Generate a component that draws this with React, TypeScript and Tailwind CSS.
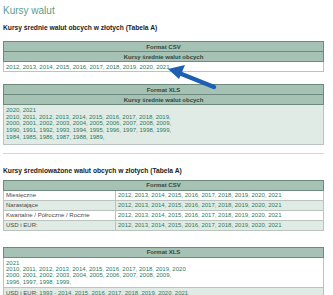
import React from 'react'

const years = (from: number, to: number) => {
  const out: number[] = []
  for (let y = from; y <= to; y++) out.push(y)
  return out.join(', ')
}

function HeaderRow({ label, span = 1 }: { label: string; span?: number }) {
  return (
    <tr>
      <th
        colSpan={span}
        className="h-[10px] border border-[#6e8a7d] bg-[#a5c2b5] p-0 text-center text-[6px] font-bold leading-[8px] text-[#35463e]"
      >
        {label}
      </th>
    </tr>
  )
}

function App() {
  const weighted = [
    { label: 'Miesięczne', bg: 'bg-white' },
    { label: 'Narastające', bg: 'bg-[#e0ebe5]' },
    { label: 'Kwartalne / Półroczne / Roczne', bg: 'bg-white' },
    { label: 'USD i EUR:', bg: 'bg-[#e0ebe5]' },
  ]

  return (
    <div className="relative h-[295px] w-[333px] overflow-hidden bg-white font-['Liberation_Sans',Arial,sans-serif]">
      <div className="flex w-[324px] flex-col pl-[3px] pt-[4px]">
        <h1 className="text-[10px] leading-[14px] text-[#5e9c8a]">Kursy walut</h1>

        <h2 className="mt-[5px] text-[6.7px] font-bold leading-[9px] text-[#222]">
          Kursy średnie walut obcych w złotych (Tabela A)
        </h2>

        {/* CSV */}
        <table className="mt-[9px] w-full border-collapse border border-[#6e8a7d]">
          <tbody>
            <HeaderRow label="Format CSV" />
            <HeaderRow label="Kursy średnie walut obcych" />
            <tr>
              <td className="h-[10px] border border-[#b9c4bf] bg-white px-[2px] py-0 text-[6px] leading-[8px] text-[#2f7a60]">
                {years(2012, 2021)}
              </td>
            </tr>
          </tbody>
        </table>

        {/* XLS */}
        <table className="mt-[12px] w-full border-collapse border border-[#6e8a7d]">
          <tbody>
            <HeaderRow label="Format XLS" />
            <HeaderRow label="Kursy średnie walut obcych" />
            <tr>
              <td className="border border-[#b9c4bf] bg-[#e0ebe5] px-[2px] pb-[3px] pt-[2px] text-[6px] leading-[6.7px] text-[#2f7a60]">
                <div>2020, 2021</div>
                <div>{years(2010, 2019)},</div>
                <div>{years(2000, 2009)},</div>
                <div>{years(1990, 1999)},</div>
                <div>{years(1984, 1989)},</div>
              </td>
            </tr>
          </tbody>
        </table>

        <div className="mt-[8px] h-px w-full bg-[#d6d6d6]" />

        <h2 className="mt-[12px] text-[6.7px] font-bold leading-[9px] text-[#222]">
          Kursy średnioważone walut obcych w złotych (Tabela A)
        </h2>

        <table className="mt-[5px] w-full border-collapse border border-[#6e8a7d]">
          <tbody>
            <HeaderRow label="Format CSV" span={2} />
            {weighted.map((row) => (
              <tr key={row.label} className={row.bg}>
                <td className="h-[10px] w-[112px] border border-[#b9c4bf] px-[2px] py-0 text-[6px] leading-[8px] text-[#4a4a4a]">
                  {row.label}
                </td>
                <td className="h-[10px] border border-[#b9c4bf] px-[2px] py-0 text-[6px] leading-[8px] text-[#2f7a60]">
                  {years(2012, 2021)}
                </td>
              </tr>
            ))}
          </tbody>
        </table>

        <table className="mt-[16px] w-full border-collapse border border-[#6e8a7d]">
          <tbody>
            <HeaderRow label="Format XLS" />
            <tr>
              <td className="border border-[#b9c4bf] bg-white px-[2px] pb-[2px] pt-[2px] text-[6px] leading-[6.4px] text-[#2f7a60]">
                <div>2021</div>
                <div>{years(2010, 2020)}</div>
                <div>{years(2000, 2009)},</div>
                <div>{years(1996, 1999)},</div>
              </td>
            </tr>
            <tr>
              <td className="h-[10px] border border-[#b9c4bf] bg-[#e0ebe5] px-[2px] py-0 text-[6px] leading-[8px] text-[#2f7a60]">
                <span className="text-[#4a4a4a]">USD i EUR: </span>
                1993 - 2014, {years(2015, 2021)}
              </td>
            </tr>
          </tbody>
        </table>
      </div>

      {/* blue pointer arrow */}
      <svg className="absolute left-[165px] top-[63px]" width="54" height="27" viewBox="0 0 54 27">
        <path d="M49 24 L14 10" stroke="#1d5fb3" strokeWidth="4.5" strokeLinecap="round" fill="none" />
        <path d="M3 6 L20 2 L14 16 Z" fill="#1d5fb3" />
      </svg>
    </div>
  )
}

export default App
